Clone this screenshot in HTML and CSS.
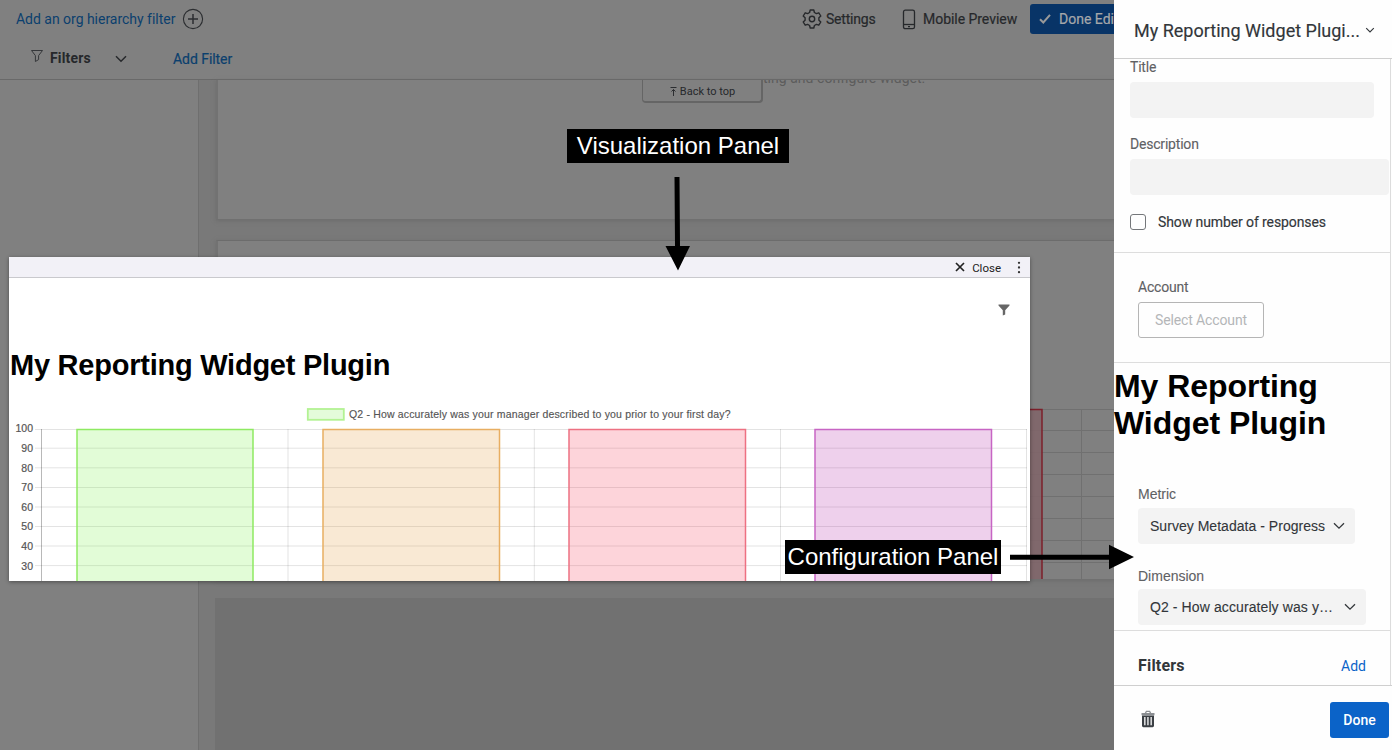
FILE: index.html
```html
<!DOCTYPE html>
<html lang="en">
<head>
<meta charset="utf-8">
<title>My Reporting Widget Plugin</title>
<link rel="stylesheet" href="styles.css">
</head>
<body>
<div class="app">
  <main class="workspace">
    <header class="toolbar">
      <div class="toolbar-row">
        <a class="org-link">Add an org hierarchy filter</a>
        <svg class="plus" width="22" height="22" viewBox="0 0 22 22" fill="none" stroke="#2b2d30" stroke-width="1.1"><circle cx="11" cy="11" r="9.6"/><path d="M11 6v10M6 11h10" stroke-width="1.5"/></svg>
        <div class="actions">
          <svg width="20" height="20" viewBox="0 0 20 20" fill="none" stroke="#26282b" stroke-width="1.4" stroke-linejoin="round"><path d="M8.2 1h3.6l.6 2.5 2 1.1 2.4-.8L18.8 7l-1.9 1.8v2.4l1.9 1.8-2 3.2-2.4-.8-2 1.1-.6 2.5H8.2l-.6-2.5-2-1.1-2.4.8-2-3.2 1.9-1.8V8.8L1.200 7l2-3.200 2.400.8 2-1.100z"/><circle cx="10" cy="10" r="2.700"/></svg>
          <span class="settings">Settings</span>
          <svg class="phone" width="14" height="21" viewBox="0 0 14 21" fill="none" stroke="#26282b" stroke-width="1.300"><rect x="1.500" y="1.200" width="11" height="18.500" rx="1.800"/><path d="M1.500 15.500h11"/><path d="M6 17.600h2"/></svg>
          <span class="mobile">Mobile Preview</span>
          <div class="done-editing"><svg width="14" height="12" viewBox="0 0 14 12" fill="none" stroke="#999" stroke-width="2"><path d="M2 6.200l3.300 3.300L12 1.800"/></svg><span>Done Edi</span></div>
        </div>
      </div>
      <div class="filter-row">
        <svg class="funnel" width="14" height="14" viewBox="0 0 14 14" fill="none" stroke="#35373a" stroke-width="1"><path d="M1.500 1.500h11L8.600 6.600v4L5.400 12.500V6.600z"/></svg>
        <b>Filters</b>
        <svg class="chev" width="12" height="8" viewBox="0 0 12 8" fill="none" stroke="#26282b" stroke-width="1.500"><path d="M1 1.200l5 5 5-5"/></svg>
        <a>Add Filter</a>
      </div>
    </header>
    <div class="board">
      <aside class="sidebar"></aside>
      <div class="cards">
        <section class="card first">
          <div class="to-top"><svg width="7" height="9" viewBox="0 0 7 9" fill="none" stroke="#2b2d30"><path d="M.5 .5h6M3.500 9V2.500M1.500 4.500l2-2 2 2"/></svg><span>Back to top</span></div>
          <div class="hint"><span>ting and configure widget.</span></div>
        </section>
        <section class="card second">
          <svg class="back-chart" width="896" height="338" viewBox="218 241 896 338" fill="none">
            <path stroke="#707070" d="M900 409.500h214M900 430.500h214M900 452.500h214M900 474.500h214M900 496.500h214M900 518.500h214M900 540.500h214M900 562.500h214M1081.500 409v170"/>
            <rect x="900" y="409.500" width="142" height="180" fill="#7f6569" fill-opacity=".9" stroke="#7c1f2a" stroke-width="1.500"/>
          </svg>
        </section>
        <section class="empty-card"></section>
      </div>
    </div>
  </main>

  <aside class="config">
    <header class="config-head"><span>My Reporting Widget Plugi...</span><svg width="10" height="7" viewBox="0 0 10 7" fill="none" stroke="#32363a" stroke-width="1.100"><path d="M1.200 1.200L5 5l3.800-3.800"/></svg></header>
    <div class="config-body">
      <section class="basics">
        <label class="l-title">Title</label>
        <div class="field short"></div>
        <label class="l-desc">Description</label>
        <div class="field"></div>
        <div class="check-row"><i class="checkbox"></i><span>Show number of responses</span></div>
      </section>
      <section class="account">
        <label>Account</label>
        <button class="select-account">Select Account</button>
      </section>
      <section class="plugin">
        <h1>My Reporting<br>Widget Plugin</h1>
        <label class="l-metric">Metric</label>
        <div class="drop metric"><span>Survey Metadata - Progress</span><svg width="12" height="8" viewBox="0 0 12 8" fill="none" stroke="#32363a" stroke-width="1.300"><path d="M1 1.200l5 5 5-5"/></svg></div>
        <label class="l-dim">Dimension</label>
        <div class="drop dim"><span>Q2 - How accurately was y…</span><svg width="12" height="8" viewBox="0 0 12 8" fill="none" stroke="#32363a" stroke-width="1.300"><path d="M1 1.200l5 5 5-5"/></svg></div>
      </section>
      <section class="filters"><b>Filters</b><a>Add</a></section>
    </div>
    <footer class="config-foot">
      <svg class="trash" width="14" height="18" viewBox="0 0 14 18"><path fill="#8b8e92" d="M.5 3h3.300L5 .8h4L10.200 3h3.300v2.200H.5zM5.200 3h3.600l-.6-1H5.800z"/><path fill="#3b3f44" fill-rule="evenodd" d="M1 5.500h12v10.300q0 1.400-1.400 1.400H2.400Q1 17.200 1 15.800zM3.200 7v8.300h1.300V7zM6.300 7v8.300h1.300V7zM9.500 7v8.300h1.300V7z"/></svg>
      <button>Done</button>
    </footer>
  </aside>
</div>

<section class="modal">
  <header class="modal-head">
    <svg width="10" height="10" viewBox="0 0 10 10" stroke="#222" stroke-width="1.700"><path d="M1 1l8 8M9 1L1 9"/></svg>
    <span>Close</span>
    <svg class="dots" width="4" height="13" viewBox="0 0 4 13" fill="#333"><circle cx="2" cy="1.800" r="1.150"/><circle cx="2" cy="6.500" r="1.150"/><circle cx="2" cy="11.200" r="1.150"/></svg>
  </header>
  <div class="modal-tools"><svg width="12" height="12" viewBox="0 0 12 12" fill="#666"><path d="M.5.5h11v1L7.200 6.200v4.300l-2.400.9V6.200L.5 1.500z"/></svg></div>
  <h1>My Reporting Widget Plugin</h1>
  <svg class="chart" width="1021" height="181" viewBox="9 400 1021 181" fill="none">
    <path stroke="#000" stroke-opacity=".11" d="M35 429.500h992M35 448.200h992M35 467.800h992M35 487.500h992M35 507h992M35 526.500h992M35 546h992M35 565.600h992M288 429v152M534.300 429v152M780.500 429v152M1026.500 429v152"/>
    <path stroke="#000" stroke-opacity=".28" d="M41.500 429v152"/>
    <g stroke-width="1.500">
      <rect x="77" y="429.500" width="176" height="170" fill="#7cf04a" fill-opacity=".22" stroke="#8eea62"/>
      <rect x="323" y="429.500" width="176.500" height="170" fill="#e39a3c" fill-opacity=".22" stroke="#e8ae62"/>
      <rect x="569" y="429.500" width="176.500" height="170" fill="#f43a55" fill-opacity=".22" stroke="#ed7182"/>
      <rect x="815" y="429.500" width="176.500" height="170" fill="#b22baa" fill-opacity=".22" stroke="#c765c4"/>
      <rect x="307.800" y="409" width="36" height="10.800" fill="#e4fbda" stroke="#b3f293" stroke-width="1.800"/>
    </g>
    <g class="ticks" text-anchor="end">
      <text x="33" y="432">100</text><text x="33" y="452">90</text><text x="33" y="471.500">80</text><text x="33" y="491">70</text><text x="33" y="510.500">60</text><text x="33" y="530">50</text><text x="33" y="550">40</text><text x="33" y="569.500">30</text>
    </g>
    <text class="legend" x="349" y="418" textLength="381.500">Q2 - How accurately was your manager described to you prior to your first day?</text>
  </svg>
</section>

<div class="callout viz">Visualization Panel</div>
<svg class="arrow-down" width="26" height="96" viewBox="0 0 26 96"><path d="M9.500 1h5l.5 69h10L13 94.500.5 70h9.500z"/></svg>
<div class="callout conf">Configuration Panel</div>
<svg class="arrow-right" width="125" height="26" viewBox="0 0 125 26"><path d="M0 10.800h99V.8L124 13 99 25.200V15.800H0z"/></svg>
</body>
</html>
```
FILE: styles.css
```css
* { box-sizing: border-box; }
body { margin: 0; width: 1392px; height: 750px; overflow: hidden; position: relative; font-family: Roboto, "Liberation Sans", sans-serif; font-size: 14px; color: #32363a; }
svg { display: block; flex: none; }
h1 { margin: 0; font-family: "Liberation Sans", Arial, sans-serif; color: #000; }
.app { display: flex; height: 750px; }
.workspace { width: 1114px; flex: none; background: #808080; overflow: hidden; display: flex; flex-direction: column; }
.toolbar { height: 80px; flex: none; border-bottom: 1px solid #696969; color: #26282b; white-space: nowrap; }
.toolbar a { color: #0b3f6e; }
.toolbar-row { display: flex; align-items: center; height: 38px; padding-left: 16px; }
.org-link { width: 166px; letter-spacing: -.02px; }
.actions { display: flex; align-items: center; margin-left: auto; -webkit-text-stroke: .2px; }
.settings { margin-left: 4px; width: 76px; letter-spacing: -.2px; }
.phone { margin-right: 7px; }
.mobile { width: 107px; letter-spacing: -.04px; }
.done-editing { width: 84px; height: 30px; background: #083467; border-radius: 3px 0 0 3px; color: #a5a7aa; display: flex; align-items: center; gap: 7px; padding-left: 8px; }
.filter-row { display: flex; align-items: center; height: 41px; padding-left: 30px; }
.funnel { margin: -5px 6px 0 0; }
.filter-row b { width: 65px; letter-spacing: .15px; margin-top: -1px; }
.chev { margin-right: 46px; }
.filter-row a { -webkit-text-stroke: .2px; letter-spacing: -.05px; margin-top: 1px; }
.board { display: flex; flex: 1; background: #797979; }
.sidebar { width: 199px; background: #808080; border-right: 1px solid #6f6f6f; }
.cards { flex: 1; padding-left: 17px; }
.card { background: #808080; border-left: 2px solid #727272; border-bottom: 1px solid #707070; box-shadow: 0 1px 4px #6c6c6c; }
.first { height: 140px; display: flex; align-items: flex-start; padding-left: 424px; }
.hint { height: 10px; overflow: hidden; display: flex; align-items: flex-end; color: #5c5c5c; }
.hint span { line-height: 23px; letter-spacing: .03px; white-space: nowrap; }
.to-top { width: 121px; height: 23px; border: 1px solid #656565; border-width: 0 2px 2px 1px; border-radius: 0 0 4px 4px; display: flex; align-items: center; justify-content: center; gap: 3px; padding: 1px 0 0 1px; font-size: 11px; color: #26282b; }
.second { height: 340px; margin-top: 20px; border-top: 1px solid #6c6c6c; }
.empty-card { height: 152px; margin: 18px 0 0 -1px; background: #717171; }

.config { width: 278px; flex: none; background: #fefefe; display: flex; flex-direction: column; }
.config-head { height: 59px; flex: none; border-bottom: 1px solid #cfcfcf; display: flex; align-items: center; gap: 5px; padding: 3px 0 0 20px; font-size: 18px; white-space: nowrap; -webkit-text-stroke: .15px; }
.config-head span { width: 226px; }
.config-body { width: 277px; height: 626px; border-right: 1px solid #dcdcdc; }
label { display: block; color: #5f6164; line-height: 18px; letter-spacing: -.2px; -webkit-text-stroke: .1px; }
.basics { height: 194px; padding: 0 0 0 16px; border-bottom: 1px solid #ddd; }
.l-title { line-height: 17px; }
.field { height: 36px; width: 259px; border-radius: 4px; background: #f3f3f3; }
.short { width: 244px; margin-top: 6px; }
.l-desc { margin: 17px 0 6px; }
.check-row { display: flex; align-items: center; gap: 12px; margin-top: 19px; letter-spacing: -.1px; -webkit-text-stroke: .15px; }
.checkbox { width: 16px; height: 16px; border: 1px solid #74777a; border-radius: 3px; }
.account { height: 110px; padding: 25px 24px 0; border-bottom: 1px solid #ddd; }
.select-account { font: inherit; letter-spacing: -.12px; width: 126px; height: 36px; margin-top: 6px; padding: 0; border: 1px solid #b5b5b5; border-radius: 3px; background: #fefefe; color: #b4b6b8; }
.plugin { height: 268px; border-bottom: 1px solid #ddd; font-family: "Liberation Sans", Arial, sans-serif; }
.plugin h1 { height: 122px; font-size: 32px; line-height: 37px; padding-top: 5px; letter-spacing: -.05px; }
.plugin label { letter-spacing: 0; }
.plugin label, .drop { margin-left: 24px; }
.drop { height: 36px; background: #f3f3f3; border-radius: 4px; display: flex; align-items: center; justify-content: space-between; padding: 0 10px 0 12px; white-space: nowrap; letter-spacing: .03px; -webkit-text-stroke: .1px; }
.metric { width: 217px; margin-top: 5px; }
.plugin .l-dim { margin-top: 23px; }
.dim { width: 228px; margin-top: 4px; letter-spacing: .1px; }
.filters { display: flex; height: 54px; align-items: center; justify-content: space-between; padding: 15px 24px 0; }
.filters b { font-size: 16px; letter-spacing: .2px; }
.filters a { color: #0b63c8; }
.config-foot { flex: 1; border-top: 1px solid #cfcfcf; display: flex; align-items: center; justify-content: space-between; padding: 4px 3px 0 27px; }
.trash { margin-top: -2px; }
.config-foot button { width: 59px; height: 36px; border: 0; border-radius: 3px; background: #0b63c8; color: #fff; font: 500 14px Roboto, sans-serif; }

.modal { position: absolute; left: 9px; top: 257px; width: 1021px; height: 324px; background: #fff; overflow: hidden; box-shadow: 0 1px 4px rgba(0,0,0,.4); display: flex; flex-direction: column; }
.modal-head { height: 21px; flex: none; background: #f2f1f7; border-bottom: 1px solid #c9c9cd; display: flex; align-items: center; justify-content: flex-end; padding-right: 9px; font-size: 11.500px; color: #222; }
.modal-head span { margin: 2px 16px 0 7px; }
.modal-tools { height: 65px; display: flex; justify-content: flex-end; padding: 26px 20px 0; }
.modal h1 { font-size: 29px; line-height: 44px; height: 57px; padding-left: 1px; white-space: nowrap; letter-spacing: -.24px; }
.ticks { font: 10.500px "Liberation Sans", Arial, sans-serif; fill: #555; stroke: #555; stroke-width: .2px; }
.legend { font: 10.500px "Liberation Sans", Arial, sans-serif; fill: #555; stroke: #555; stroke-width: .15px; }

.callout { position: absolute; height: 34px; line-height: 34px; background: #000; color: #fff; text-align: center; font-family: "Liberation Sans", Arial, sans-serif; font-size: 24px; white-space: nowrap; }
.viz { left: 567px; top: 129px; width: 222px; }
.conf { left: 785px; top: 540px; width: 216px; }
.arrow-down { position: absolute; left: 665px; top: 176px; }
.arrow-right { position: absolute; left: 1010px; top: 544px; }
```
